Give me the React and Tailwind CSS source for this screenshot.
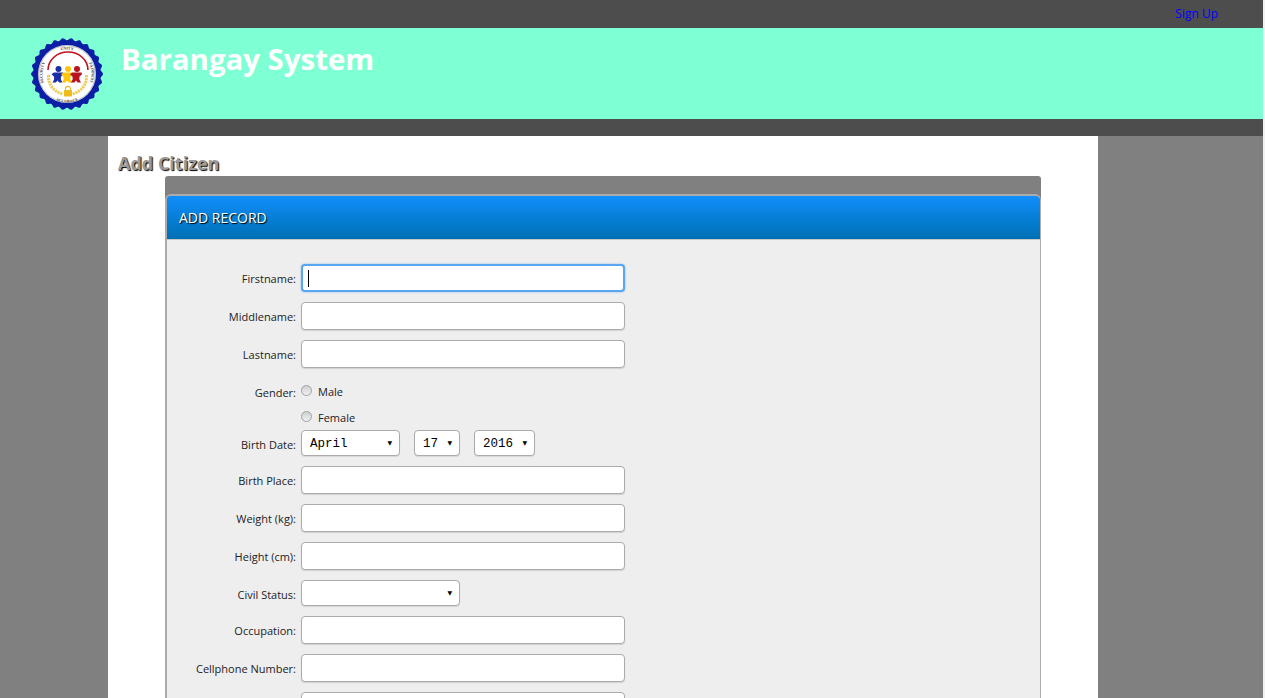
const font = { fontFamily: '"Open Sans","Noto Sans",sans-serif' };

function Logo() {
  const n = 26;
  const steps = 260;
  const pts = [];
  for (let i = 0; i < steps; i++) {
    const a = (i / steps) * Math.PI * 2;
    const r = 34.9 + 1.1 * Math.cos(a * n);
    pts.push(`${(36 + r * Math.cos(a)).toFixed(2)},${(36 + r * Math.sin(a)).toFixed(2)}`);
  }
  const person = (x, c) => (
    <g fill={c} key={x}>
      <circle cx={x} cy="31" r="3" />
      <path d={`M${x - 4.6} 34.6h9.2l.4 1.6-2.6 2.6v2.6l1.6 3.2h-3.4l-1.6-2-1.6 2h-3.4l1.6-3.2v-2.6l-2.6-2.6z`} />
    </g>
  );
  return (
    <svg width="72" height="72" viewBox="0 0 72 72" className="shrink-0">
      <defs>
        <path id="logoRing" d="M36 60.500a24.500 24.500 0 0 1 0-49a24.500 24.500 0 0 1 0 49" />
        <path id="logoBot" d="M7.500 36a28.500 28.500 0 0 0 57 0" />
      </defs>
      <polygon points={pts.join(" ")} fill="#0a1fa5" />
      <circle cx="36" cy="36" r="29" fill="#ffffff" />
      <circle cx="36" cy="36" r="28.3" fill="none" stroke="#555" strokeWidth=".4" />
      <path d="M17 32A20 18 0 0 1 57 32" fill="none" stroke="#c1121f" strokeWidth="1.6" />
      {person(27.5, "#1a2ea8")}
      {person(37, "#fbc70f")}
      {person(46, "#b8141f")}
      <path d="M17.5 37c-.5 10 5.500 17 14.500 19M55.500 37c.5 10-5.500 17-14.500 19" fill="none" stroke="#eecb5e" strokeWidth="3" strokeDasharray="2.2 .7" />
      <path d="M34.400 52.500v-1.500a2.600 2.600 0 0 1 5.200 0v1.500" fill="none" stroke="#e8b91e" strokeWidth="1.100" />
      <rect x="33" y="52" width="8" height="6.500" rx=".8" fill="#eebb1c" />
      <g fill="#333" fontSize="4" fontWeight="700" fontFamily="'Liberation Serif', serif">
        <text textAnchor="middle"><textPath href="#logoRing" startOffset="26%">SECURITY</textPath></text>
        <text textAnchor="middle"><textPath href="#logoRing" startOffset="50%">UNITY</textPath></text>
        <text textAnchor="middle"><textPath href="#logoRing" startOffset="74%">FAIRNESS</textPath></text>
        <text textAnchor="middle"><textPath href="#logoBot" startOffset="50%">ACCURACY</textPath></text>
      </g>
    </svg>
  );
}

const label = "w-[134px] shrink-0 text-right text-[11px] leading-none text-[#222] pr-[5px]";
const inputCls = "block h-[28px] w-[324px] rounded-[4px] border border-[#ababab] bg-white shadow-[0_1px_1px_rgba(0,0,0,0.12)]";
const selectCls = "flex h-[26px] items-center justify-between rounded-[4px] border border-[#ababab] bg-white pl-[8px] pr-[7px] pt-[3px] text-[12.5px] text-black shadow-[0_1px_1px_rgba(0,0,0,0.1)]";
const mono = { fontFamily: '"Liberation Mono","DejaVu Sans Mono",monospace' };

function Caret() {
  return <span className="mb-[4px] text-[6px] leading-none text-black" style={{ fontFamily: '"DejaVu Sans",sans-serif' }}>▼</span>;
}

function TextRow({ name, focused }) {
  return (
    <div className="mb-[10px] flex h-[28px] items-center">
      <span className={label} style={font}>{name}:</span>
      {focused ? (
        <div className="flex h-[28px] w-[324px] items-center rounded-[4px] border-2 border-[#5aa5f0] bg-white pl-[5px] shadow-[0_0_2px_rgba(60,150,240,0.6)]">
          <span className="block h-[17px] w-px bg-black" />
        </div>
      ) : (
        <input className={inputCls} readOnly />
      )}
    </div>
  );
}

function Radio({ name, className = "" }) {
  return (
    <div className={`flex items-center ${className}`}>
      <span className="mb-[2px] h-[11px] w-[11px] rounded-full border border-[#a0a0a0] bg-gradient-to-b from-[#cfcfcf] to-[#f2f2f2]" />
      <span className="ml-[6px] text-[11px] leading-none text-[#222]" style={font}>{name}</span>
    </div>
  );
}

export default function App() {
  return (
    <div className="h-[698px] overflow-hidden border-r-2 border-[#f1f1f1] bg-[#808080]" style={font}>
      <div className="flex h-[28px] items-center justify-end bg-[#4d4d4d] pr-[45px]">
        <a className="text-[12px] text-[#0000ff]" style={font}>Sign Up</a>
      </div>
      <div className="flex h-[91px] items-start bg-[#7fffd4] pl-[31px] pt-[10px]">
        <Logo />
        <h1 className="ml-[18px] mt-[1px] text-[29.4px] font-bold leading-[40px] text-white">Barangay System</h1>
      </div>
      <div className="h-[17px] bg-[#4d4d4d]" />
      <main className="ml-[108px] h-[600px] w-[990px] bg-white pl-[10px] pt-[15px]">
        <h2 className="h-[25px] text-[18px] font-bold leading-[24px] text-[#9a9a9a] [text-shadow:1px_1px_1px_#000]">Add Citizen</h2>
        <div className="ml-[47px] h-[24px] w-[876px] rounded-t-[3px] bg-[#808080]" />
        <div className="-mt-[6px] ml-[47px] w-[876px] overflow-hidden rounded-t-[6px] border-b border-l-2 border-r border-t-2 border-[#ababab]">
          <div className="flex h-[43px] items-center bg-gradient-to-b from-[#118efc] to-[#0070b4] pl-[12px] text-[14px] text-white [text-shadow:1px_1px_1px_#000]">ADD RECORD</div>
          <div className="h-[480px] border-t border-[#c8c8c8] bg-[#eeeeee] pt-[24px]">
            <TextRow name="Firstname" focused />
            <TextRow name="Middlename" />
            <TextRow name="Lastname" />
            <div className="flex h-[26px]">
              <span className={`${label} pt-[9px]`} style={font}>Gender:</span>
              <Radio name="Male" className="h-[26px]" />
            </div>
            <div className="flex h-[26px]">
              <span className="w-[134px]" />
              <Radio name="Female" />
            </div>
            <div className="mb-[10px] flex h-[26px] items-center">
              <span className={`${label} pt-[2px]`} style={font}>Birth Date:</span>
              <div className={`${selectCls} w-[99px]`} style={mono}><span>April</span><Caret /></div>
              <div className={`${selectCls} ml-[14px] w-[46px]`} style={mono}><span>17</span><Caret /></div>
              <div className={`${selectCls} ml-[14px] w-[61px]`} style={mono}><span>2016</span><Caret /></div>
            </div>
            <TextRow name="Birth Place" />
            <TextRow name="Weight (kg)" />
            <TextRow name="Height (cm)" />
            <div className="mb-[10px] flex h-[26px] items-center">
              <span className={`${label} pt-[2px]`} style={font}>Civil Status:</span>
              <div className={`${selectCls} w-[159px]`}><span /><Caret /></div>
            </div>
            <TextRow name="Occupation" />
            <TextRow name="Cellphone Number" />
            <div className="flex">
              <span className="w-[134px]" />
              <input className={inputCls} readOnly />
            </div>
          </div>
        </div>
      </main>
    </div>
  );
}
